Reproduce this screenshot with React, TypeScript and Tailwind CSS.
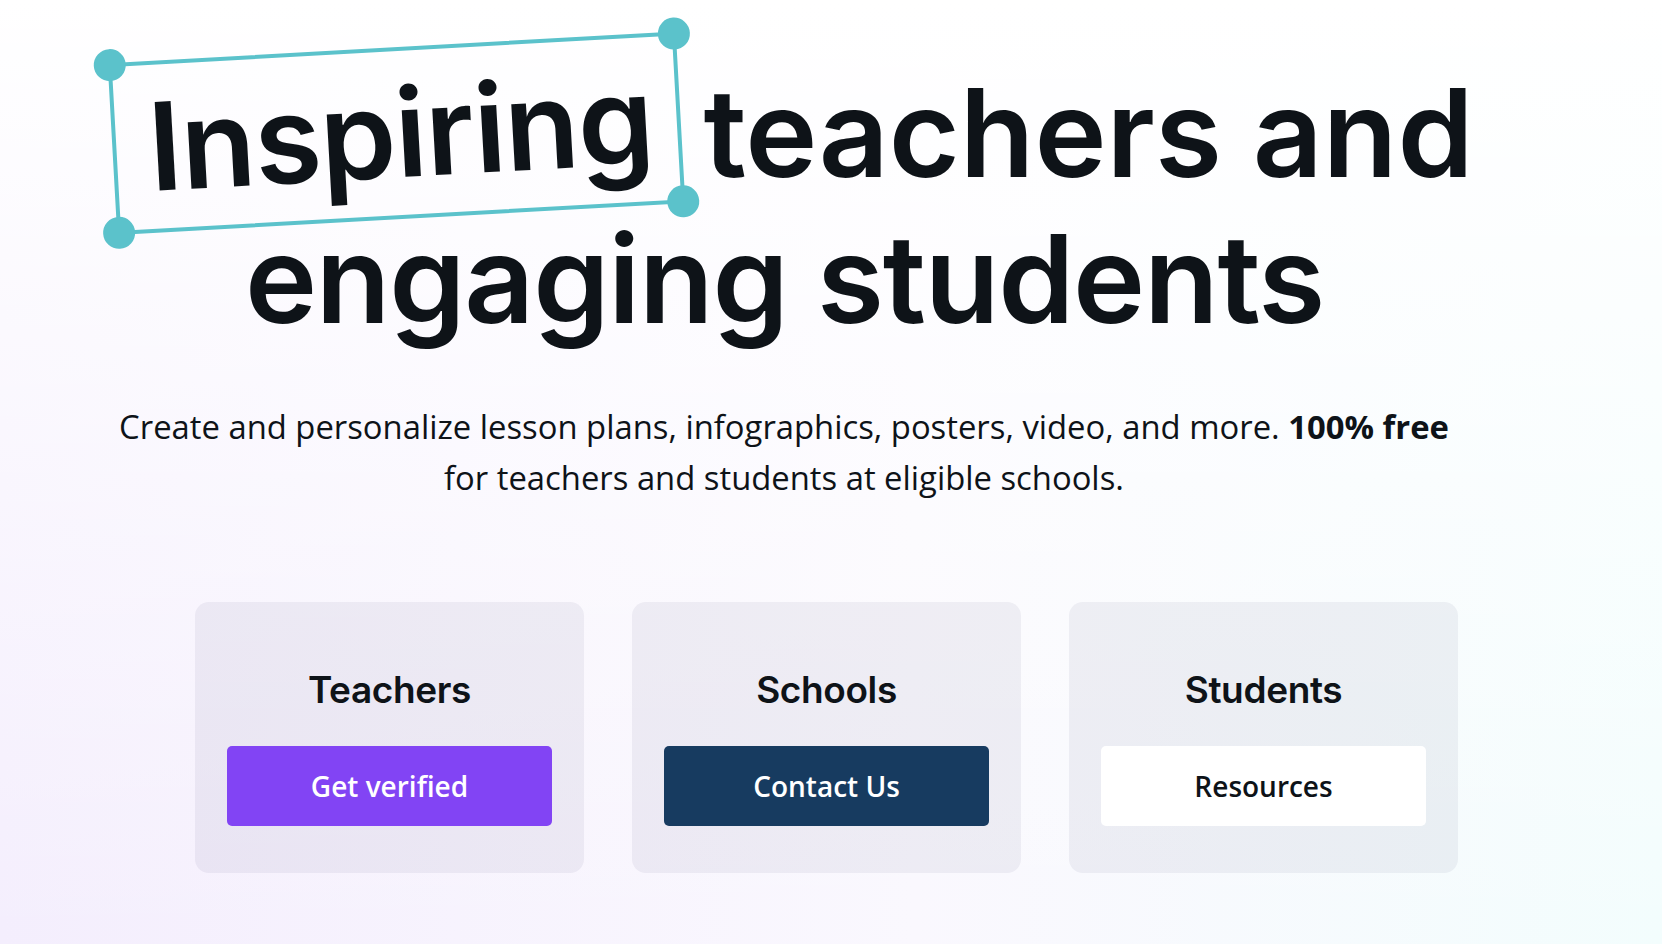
import React from "react";

const display = { fontFamily: "Inter, 'Noto Sans', sans-serif" };
const body = { fontFamily: "'Open Sans', 'Noto Sans', sans-serif" };

const Dot = ({ className }: { className: string }) => (
  <span className={`absolute h-8 w-8 rounded-full bg-[#5bc2cb] ${className}`} />
);

const Card = ({
  title,
  label,
  btnClass,
}: {
  title: string;
  label: string;
  btnClass: string;
}) => (
  <div className="flex h-[271px] w-[389px] flex-col items-center rounded-[14px] bg-[#1e1e5a]/[0.06] px-8 pt-[66px]">
    <h3 style={display} className="text-[37px] font-semibold leading-[44px] tracking-[-0.01em] text-[#0e1318]">
      {title}
    </h3>
    <button
      style={body}
      className={`mt-[34px] flex h-20 w-full items-center justify-center rounded-[5px] text-[28px] font-semibold ${btnClass}`}
    >
      {label}
    </button>
  </div>
);

export default function App() {
  return (
    <main className="min-h-screen w-full overflow-hidden bg-[linear-gradient(to_bottom,#ffffff_0%,rgba(255,255,255,0)_100%),linear-gradient(to_right,#f4eefd_0%,#faf8fe_55%,#f3fdfd_100%)] pt-[60px] pb-16 text-[#0e1318]">
      <h1 style={display} className="flex flex-col items-center text-[122px] font-semibold leading-[146px] tracking-[-0.01em]">
        <div className="flex items-baseline pr-[40px]">
          <span className="relative mr-[50px] inline-block -rotate-[3.2deg]">
            <span className="pointer-events-none absolute -left-[36px] -right-[28px] -inset-y-[13px] border-[4px] border-[#5bc2cb]">
              <Dot className="-left-[18px] -top-[18px]" />
              <Dot className="-right-[18px] -top-[18px]" />
              <Dot className="-left-[18px] -bottom-[18px]" />
              <Dot className="-right-[18px] -bottom-[18px]" />
            </span>
            Inspiring
          </span>
          <span className="tracking-normal">teachers and</span>
        </div>
        <div className="pr-[93px]">engaging students</div>
      </h1>

      <div className="mt-[49px] pr-[94px]">
        <p style={body} className="mx-auto max-w-[1350px] text-center text-[32.8px] leading-[51px] text-[#0e1318]">
          Create and personalize lesson plans, infographics, posters, video, and more.{" "}
          <strong className="font-bold">100% free</strong> for teachers and students at eligible schools.
        </p>
      </div>

      <section className="mt-[99px] flex justify-center gap-12 pr-[9px]">
        <Card title="Teachers" label="Get verified" btnClass="bg-[#8244f4] text-white" />
        <Card title="Schools" label="Contact Us" btnClass="bg-[#173b60] text-white" />
        <Card title="Students" label="Resources" btnClass="bg-white text-[#0e1318]" />
      </section>
    </main>
  );
}
